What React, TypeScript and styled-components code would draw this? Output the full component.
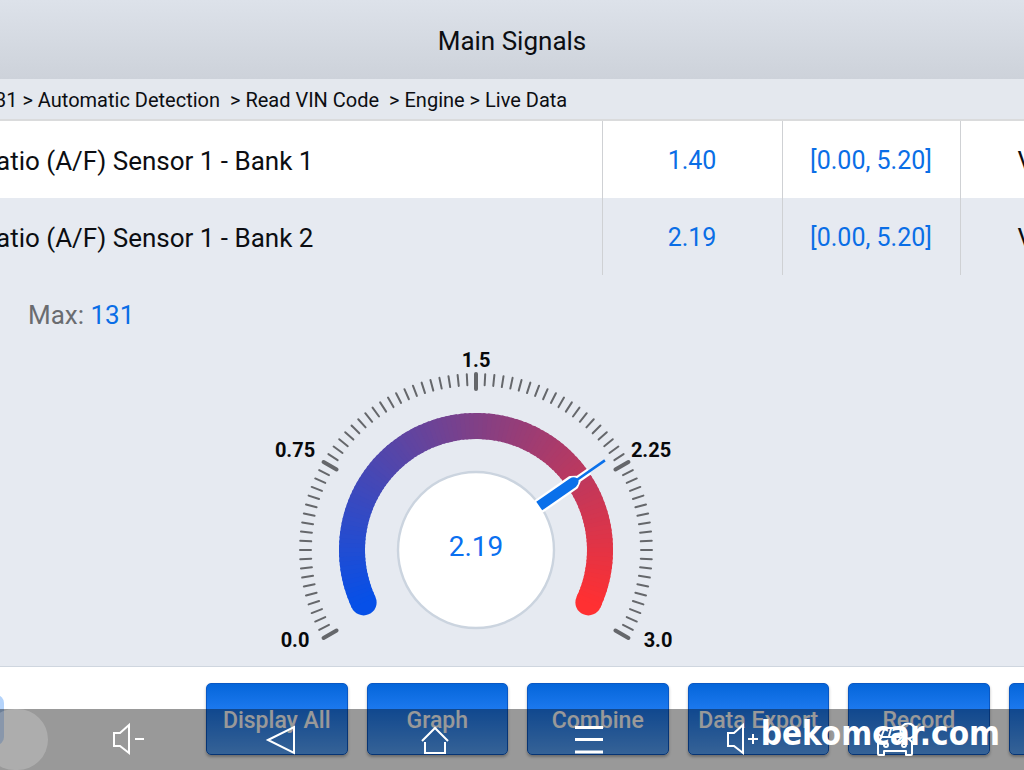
import React from "react";
import styled, { createGlobalStyle } from "styled-components";

const GlobalStyle = createGlobalStyle`
  * { box-sizing: border-box; }
  body {
    margin: 0;
    background: #e6eaf1;
    font-family: Roboto, "Liberation Sans", sans-serif;
    color: #0c0e12;
  }
`;

const Screen = styled.div`
  position: relative;
  min-height: 100vh;
  display: flex;
  flex-direction: column;
  overflow: hidden;
`;

const TitleBar = styled.header`
  padding: 25px 0 22px;
  background: linear-gradient(#dde2ea, #cdd2da);
  text-align: center;
`;

const Title = styled.h1`
  margin: 0;
  font-size: 26px;
  line-height: 32px;
  font-weight: 400;
`;

const Breadcrumb = styled.nav`
  padding: 6px 0 4px;
  margin-left: -5px;
  background: #e4e8ee;
  border-bottom: 2px solid #dadbdc;
  font-size: 20px;
  line-height: 30px;
  white-space: pre;
`;

const SignalTable = styled.table`
  width: 100%;
  table-layout: fixed;
  border-collapse: collapse;
  font-size: 26px;
  line-height: 32px;
`;

const Row = styled.tr<{ $striped?: boolean }>`
  background: ${(p) => (p.$striped ? "#e6eaf1" : "#ffffff")};
`;

const Cell = styled.td<{ $width?: number; $kind: "name" | "value" | "unit" }>`
  width: ${(p) => (p.$width ? `${p.$width}px` : "auto")};
  padding: ${(p) => (p.$kind === "unit" ? "24px 0 21px 57px" : "24px 0 21px")};
  border-left: ${(p) => (p.$kind === "name" ? "none" : "1px solid #cfd1d4")};
  color: ${(p) => (p.$kind === "value" ? "#0a6ee6" : "#0c0e12")};
  font-size: ${(p) => (p.$kind === "value" ? "25px" : "26px")};
  text-align: ${(p) => (p.$kind === "value" ? "center" : "left")};
  text-indent: ${(p) => (p.$kind === "name" ? "-4px" : "0")};
  white-space: nowrap;
  overflow: hidden;
`;

const GaugePanel = styled.main`
  flex: 1;
  padding: 24px 28px 0;
`;

const MaxLine = styled.p`
  margin: 0 0 10px;
  font-size: 26px;
  line-height: 32px;
  color: #6a6c70;
`;

const MaxValue = styled.span`
  color: #0a6ee6;
`;

const GaugeWrap = styled.div`
  display: flex;
  justify-content: center;
  padding-right: 72px;
`;

const GaugeSvg = styled.svg`
  display: block;
  width: 420px;
  height: 320px;
`;

const ScaleLabel = styled.text`
  font-size: 20px;
  font-weight: 700;
  fill: #08090b;
  text-anchor: middle;
`;

const ReadingLabel = styled.text`
  font-size: 28px;
  fill: #0a70f0;
  text-anchor: middle;
`;

const Footer = styled.footer`
  height: 104px;
  display: flex;
  align-items: flex-start;
  background: #ffffff;
  border-top: 1px solid #cfd6df;
  padding-top: 16px;
  overflow: hidden;
`;

const DimTab = styled.button`
  flex: none;
  width: 24px;
  height: 50px;
  margin: 12px 0 0 -20px;
  border: 0;
  border-radius: 8px;
  background: #b4d3fa;
`;

const Actions = styled.div`
  flex: 1;
  display: grid;
  grid-template-columns: repeat(6, 1fr);
  gap: 19px;
  margin: 0 -126px 0 202px;
`;

const ActionButton = styled.button`
  height: 72px;
  padding: 2px 0 0;
  border: 1px solid #0a58c4;
  border-radius: 5px;
  background: linear-gradient(#0566da, #1b78ee 35%, #5aa4fb);
  box-shadow: 0 2px 3px rgba(0, 0, 0, 0.3);
  color: #ffffff;
  font-family: inherit;
  font-size: 23px;
  font-weight: 500;
  white-space: nowrap;
`;

const SystemBar = styled.nav`
  position: absolute;
  left: 0;
  right: 0;
  bottom: 0;
  height: 61px;
  display: grid;
  grid-template-columns: repeat(6, 1fr);
  padding: 0 51px 1px;
  background: rgba(0, 0, 0, 0.4);
  overflow: hidden;
`;

const EdgeHandle = styled.span`
  position: absolute;
  left: -16px;
  top: 0;
  width: 64px;
  height: 61px;
  border-radius: 32px;
  background: rgba(255, 255, 255, 0.2);
`;

const SystemButton = styled.button`
  display: flex;
  align-items: center;
  justify-content: center;
  padding: 0;
  border: 0;
  background: none;
`;

const Glyph = styled.svg`
  width: 40px;
  height: 40px;
  fill: none;
  stroke: #ffffff;
  stroke-width: 2;
`;

const SiteMark = styled.div`
  position: absolute;
  right: 24px;
  bottom: 14px;
  font-family: "DejaVu Sans Condensed", "Noto Sans", sans-serif;
  font-size: 33px;
  line-height: 44px;
  font-weight: 700;
  color: #ffffff;
`;

const CX = 210;
const CY = 209;

const point = (radius: number, degrees: number) => {
  const a = (degrees * Math.PI) / 180;
  return { x: CX + radius * Math.cos(a), y: CY - radius * Math.sin(a) };
};

const colourStops = [
  [0, 6, 80, 232],
  [0.5, 129, 64, 134],
  [1, 255, 48, 50],
];

const arcColour = (t: number) => {
  const i = Math.max(1, colourStops.findIndex((s) => s[0] >= t));
  const a = colourStops[i - 1];
  const b = colourStops[i];
  const k = (t - a[0]) / (b[0] - a[0]);
  const mix = [1, 2, 3].map((n) => Math.round(a[n] + (b[n] - a[n]) * k));
  return `rgb(${mix.join(",")})`;
};

const ARC_START = 205;
const ARC_SWEEP = 230;
const SEGMENTS = 115;

function Gauge({ value, max }: { value: number; max: number }) {
  const ticks = Array.from({ length: 81 }, (_, i) => i);
  const segments = Array.from({ length: SEGMENTS }, (_, i) => i);
  const startCap = point(124, ARC_START);
  const endCap = point(124, ARC_START - ARC_SWEEP);
  const needleAngle = 210 - (value / max) * 240;

  return (
    <GaugeSvg viewBox="0 0 420 320" role="img" aria-label={`Gauge ${value}`}>
      {ticks.map((i) => {
        const major = i % 20 === 0;
        const angle = 210 - i * 3;
        const a = point(major ? 161 : 165, angle);
        const b = point(176, angle);
        return (
          <line key={i} x1={a.x} y1={a.y} x2={b.x} y2={b.y}
            stroke="#65676b" strokeWidth={major ? 4 : 2} strokeLinecap="round" />
        );
      })}
      <circle cx={startCap.x} cy={startCap.y} r={13} fill={arcColour(0)} />
      <circle cx={endCap.x} cy={endCap.y} r={13} fill={arcColour(1)} />
      {segments.map((i) => {
        const from = ARC_START - i * 2;
        const to = i === SEGMENTS - 1 ? from - 2 : from - 3;
        const a = point(124, from);
        const b = point(124, to);
        return (
          <path key={i} d={`M${a.x} ${a.y}A124 124 0 0 1 ${b.x} ${b.y}`}
            fill="none" stroke={arcColour((i + 0.5) / SEGMENTS)} strokeWidth={26} />
        );
      })}
      <circle cx={CX} cy={CY} r={78} fill="#fff" stroke="#cbd4df" strokeWidth={2.4} />
      <g transform={`translate(${CX} ${CY}) rotate(${-needleAngle})`}>
        <path d="M77-5H118L123-2V-1H157V1H123V2L118 5H77Z"
          fill="none" stroke="#fff" strokeWidth={5} strokeLinejoin="round" clipPath="url(#needleHalo)" />
        <path d="M77-5.2H118Q122-5 124-1.3H157V1.3H124Q122 5 118 5.2H77Z" fill="#0a70ea" />
      </g>
      <clipPath id="needleHalo">
        <rect x="76" y="-12" width="62" height="24" />
      </clipPath>
      <ScaleLabel x={29} y={306}>0.0</ScaleLabel>
      <ScaleLabel x={29} y={116}>0.75</ScaleLabel>
      <ScaleLabel x={210} y={26}>1.5</ScaleLabel>
      <ScaleLabel x={385} y={116}>2.25</ScaleLabel>
      <ScaleLabel x={392} y={306}>3.0</ScaleLabel>
      <ReadingLabel x={210} y={215}>{value.toFixed(2)}</ReadingLabel>
    </GaugeSvg>
  );
}

const signals = [
  { name: "atio (A/F) Sensor 1 - Bank 1", value: "1.40", range: "[0.00, 5.20]", unit: "V" },
  { name: "atio (A/F) Sensor 1 - Bank 2", value: "2.19", range: "[0.00, 5.20]", unit: "V" },
];

const actions = ["Display All", "Graph", "Combine", "Data Export", "Record", ""];

const systemItems = [
  {
    label: "Volume down",
    art: (<><path d="M6 14H12L21 6V34L12 27H6Z" /><path d="M27 20H36" /></>),
  },
  { label: "Back", art: <path d="M7 21L33 8V34Z" /> },
  {
    label: "Home",
    art: (<><path d="M7 22L20 9L33 22" /><path d="M10 23V34H30V23" /></>),
  },
  { label: "Menu", art: <path d="M6 8.5H34M6 20.5H34M6 33H34" strokeWidth={3} /> },
  {
    label: "Volume up",
    art: (<><path d="M6 14H12L21 6V34L12 27H6Z" /><path d="M26 20H36M31 15V25" /></>),
  },
  {
    label: "Vehicle",
    art: (
      <g strokeLinejoin="round" strokeLinecap="round">
        <path d="M6 18H24M4 21L8 11Q9 9 11 9H22M2 15L6 18L2 23V35Q2 36 3 36H8V32H30V36H35Q36 36 36 35V23L33 20" />
        <circle cx="32" cy="12" r="7.5" />
        <path d="M26 18L21 23M15 10L13 17" />
        <circle cx="10" cy="26" r="2" />
        <circle cx="28" cy="26" r="2" />
      </g>
    ),
  },
];

export default function App() {
  return (
    <Screen>
      <GlobalStyle />
      <TitleBar>
        <Title>Main Signals</Title>
      </TitleBar>
      <Breadcrumb aria-label="Breadcrumb">
        {"31 > Automatic Detection  > Read VIN Code  > Engine > Live Data"}
      </Breadcrumb>
      <SignalTable>
        <tbody>
          {signals.map((s, i) => (
            <Row key={s.name} $striped={i % 2 === 1}>
              <Cell $kind="name">{s.name}</Cell>
              <Cell $kind="value" $width={180}>{s.value}</Cell>
              <Cell $kind="value" $width={178}>{s.range}</Cell>
              <Cell $kind="unit" $width={64}>{s.unit}</Cell>
            </Row>
          ))}
        </tbody>
      </SignalTable>
      <GaugePanel>
        <MaxLine>Max: <MaxValue>131</MaxValue></MaxLine>
        <GaugeWrap>
          <Gauge value={2.19} max={3} />
        </GaugeWrap>
      </GaugePanel>
      <Footer>
        <DimTab aria-label="Previous" />
        <Actions>
          {actions.map((a, i) => (
            <ActionButton key={i} aria-label={a || "More"}>{a}</ActionButton>
          ))}
        </Actions>
      </Footer>
      <SystemBar aria-label="System">
        <EdgeHandle />
        {systemItems.map((s) => (
          <SystemButton key={s.label} aria-label={s.label}>
            <Glyph viewBox="0 0 40 40">{s.art}</Glyph>
          </SystemButton>
        ))}
      </SystemBar>
      <SiteMark>bekomcar.com</SiteMark>
    </Screen>
  );
}
